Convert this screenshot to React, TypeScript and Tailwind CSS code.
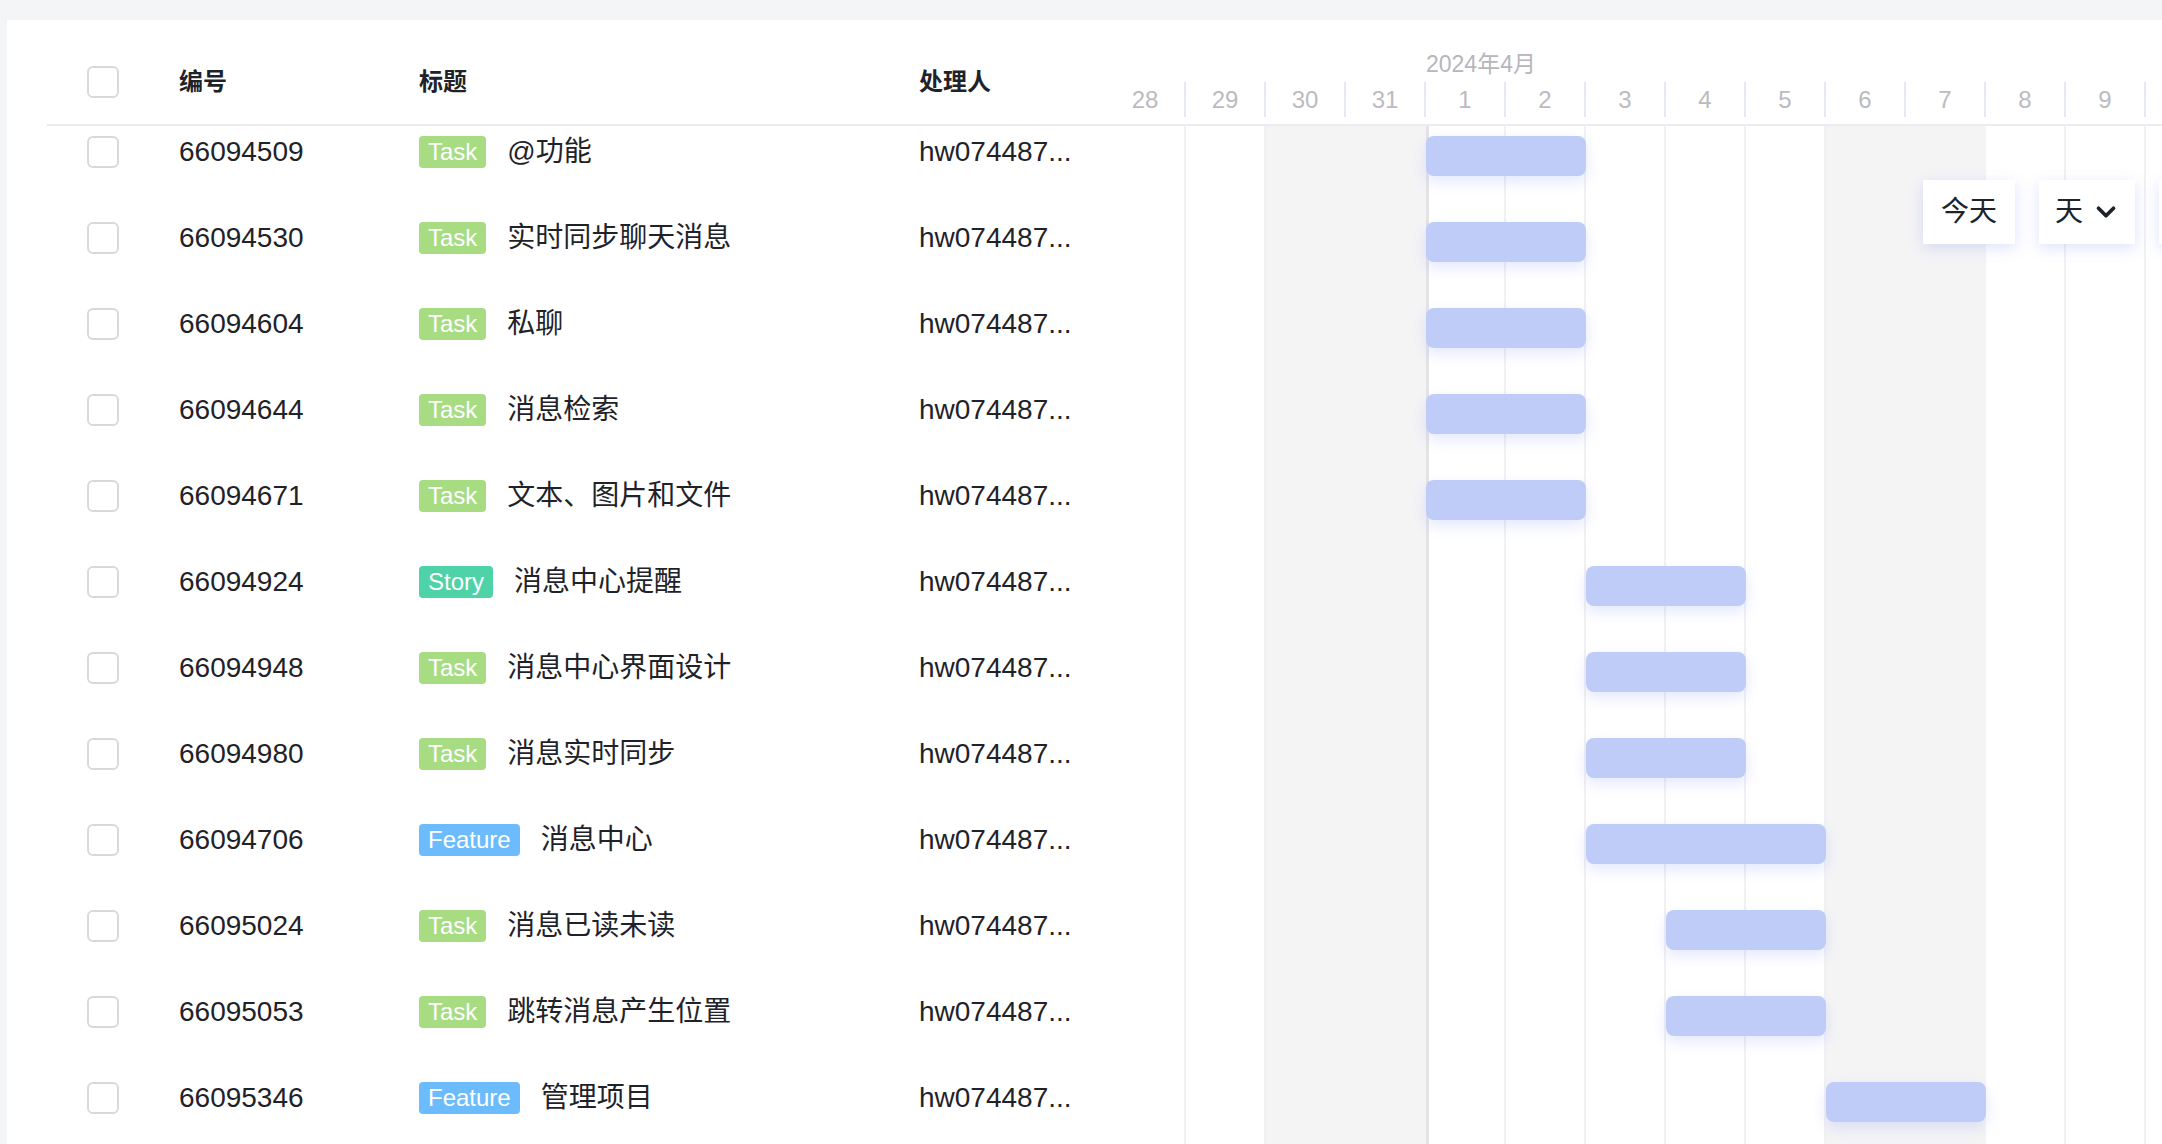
import { ChevronDown } from "lucide-react";

type Row = { id: string; type: "Task" | "Story" | "Feature"; title: string; bar: string };

const rows: Row[] = [
  { id: "66094509", type: "Task", title: "@功能", bar: "row-start-1 col-start-5 col-span-2" },
  { id: "66094530", type: "Task", title: "实时同步聊天消息", bar: "row-start-2 col-start-5 col-span-2" },
  { id: "66094604", type: "Task", title: "私聊", bar: "row-start-3 col-start-5 col-span-2" },
  { id: "66094644", type: "Task", title: "消息检索", bar: "row-start-4 col-start-5 col-span-2" },
  { id: "66094671", type: "Task", title: "文本、图片和文件", bar: "row-start-5 col-start-5 col-span-2" },
  { id: "66094924", type: "Story", title: "消息中心提醒", bar: "row-start-6 col-start-7 col-span-2" },
  { id: "66094948", type: "Task", title: "消息中心界面设计", bar: "row-start-7 col-start-7 col-span-2" },
  { id: "66094980", type: "Task", title: "消息实时同步", bar: "row-start-8 col-start-7 col-span-2" },
  { id: "66094706", type: "Feature", title: "消息中心", bar: "row-start-9 col-start-7 col-span-3" },
  { id: "66095024", type: "Task", title: "消息已读未读", bar: "row-start-10 col-start-8 col-span-2" },
  { id: "66095053", type: "Task", title: "跳转消息产生位置", bar: "row-start-11 col-start-8 col-span-2" },
  { id: "66095346", type: "Feature", title: "管理项目", bar: "row-start-12 col-start-10 col-span-2" },
];

const badgeColor = {
  Task: "bg-[#a7dc83]",
  Story: "bg-[#4dd3a7]",
  Feature: "bg-[#6cbcfd]",
};

// background day columns of the chart
const days = [
  { d: "28", cls: "col-start-1 border-r-2 border-[#f1f1f3]" },
  { d: "29", cls: "col-start-2 border-r-2 border-[#f1f1f3]" },
  { d: "30", cls: "col-start-3 bg-[#f4f4f5]" },
  { d: "31", cls: "col-start-4 bg-[#f4f4f5]" },
  { d: "1", cls: "col-start-5 border-l-[3px] border-r-2 border-l-[#e4e4e6] border-r-[#f1f1f3]" },
  { d: "2", cls: "col-start-6 border-r-2 border-[#f1f1f3]" },
  { d: "3", cls: "col-start-7 border-r-2 border-[#f1f1f3]" },
  { d: "4", cls: "col-start-8 border-r-2 border-[#f1f1f3]" },
  { d: "5", cls: "col-start-9 border-r-2 border-[#f1f1f3]" },
  { d: "6", cls: "col-start-10 bg-[#f4f4f5]" },
  { d: "7", cls: "col-start-11 bg-[#f4f4f5]" },
  { d: "8", cls: "col-start-12 border-r-2 border-[#f1f1f3]" },
  { d: "9", cls: "col-start-13 border-r-2 border-[#f1f1f3]" },
  { d: "", cls: "col-start-14 border-r-2 border-[#f1f1f3]" },
];

function Checkbox() {
  return <span className="block h-[32px] w-[32px] rounded-[6px] border-2 border-[#d9d9dc] bg-white" />;
}

export default function App() {
  return (
    <div className="h-[1144px] overflow-hidden bg-[#f4f5f7] pl-[7px] pt-[20px] font-['Liberation_Sans','Noto_Sans_CJK_SC',sans-serif] text-[#1f2329]">
      <div className="relative flex h-full flex-col bg-white pl-[40px]">
        {/* header */}
        <div className="flex h-[106px] shrink-0 border-b-2 border-[#ebebf0]">
          <div className="flex h-[78px] w-[1059px] shrink-0 items-end text-[24px] font-bold">
            <div className="flex h-[32px] w-[132px] items-center pl-[40px]">
              <Checkbox />
            </div>
            <div className="flex h-[32px] w-[240px] items-center">编号</div>
            <div className="flex h-[32px] w-[500px] items-center">标题</div>
            <div className="flex h-[32px] w-[187px] items-center">处理人</div>
          </div>
          <div className="min-w-0 flex-1 overflow-hidden pt-[31px]">
            <div className="ml-[320px] whitespace-nowrap text-[23px] leading-[26px] text-[#b6b6bb]">2024年4月</div>
            <div className="mt-[5px] flex">
              {days.map((day, i) => (
                <div
                  key={i}
                  className="flex h-[35px] w-[80px] shrink-0 items-center justify-center border-r-2 border-[#e5e8f6] text-[24px] text-[#bbbbc0]"
                >
                  {day.d}
                </div>
              ))}
            </div>
          </div>
        </div>

        {/* body */}
        <div className="flex min-h-0 flex-1">
          <div className="w-[1059px] shrink-0">
            {rows.map((row) => (
              <div key={row.id} className="flex h-[86px] items-start pt-[9px] text-[28px]">
                <div className="flex h-[34px] w-[132px] items-center pl-[40px]">
                  <Checkbox />
                </div>
                <div className="flex h-[34px] w-[240px] items-center">{row.id}</div>
                <div className="flex h-[34px] w-[500px] items-center gap-[21px]">
                  <span
                    className={`h-[32px] rounded-[4px] px-[9px] text-[24px] leading-[32px] text-white ${badgeColor[row.type]}`}
                  >
                    {row.type}
                  </span>
                  <span>{row.title}</span>
                </div>
                <div className="flex h-[34px] w-[187px] items-center whitespace-nowrap">hw074487...</div>
              </div>
            ))}
          </div>

          <div className="relative min-w-0 flex-1 overflow-hidden">
            <div className="grid grid-cols-[repeat(14,80px)] grid-rows-[repeat(12,86px)]">
              {days.map((day, i) => (
                <div key={i} className={`row-span-12 row-start-1 ${day.cls}`} />
              ))}
              {rows.map((row) => (
                <div
                  key={row.id}
                  className={`mt-[10px] h-[40px] self-start rounded-[8px] bg-[#bfccf8] shadow-[0_6px_14px_rgba(90,110,240,0.16)] ${row.bar}`}
                />
              ))}
            </div>

            {/* floating toolbar */}
            <div className="absolute left-[817px] top-[54px] flex w-max gap-[24px] whitespace-nowrap">
              <button className="flex h-[64px] shrink-0 items-center bg-white px-[18px] text-[28px] text-[#1f2329] shadow-[0_4px_14px_rgba(90,110,240,0.2)]">
                今天
              </button>
              <button className="flex h-[64px] w-[96px] shrink-0 items-center gap-[8px] bg-white pl-[16px] pr-[14px] text-[28px] text-[#1f2329] shadow-[0_4px_14px_rgba(90,110,240,0.2)]">
                天
                <ChevronDown size={30} strokeWidth={3} className="shrink-0" />
              </button>
              <button className="h-[64px] w-[96px] shrink-0 bg-white shadow-[0_4px_14px_rgba(90,110,240,0.2)]" />
            </div>
          </div>
        </div>
      </div>
    </div>
  );
}
